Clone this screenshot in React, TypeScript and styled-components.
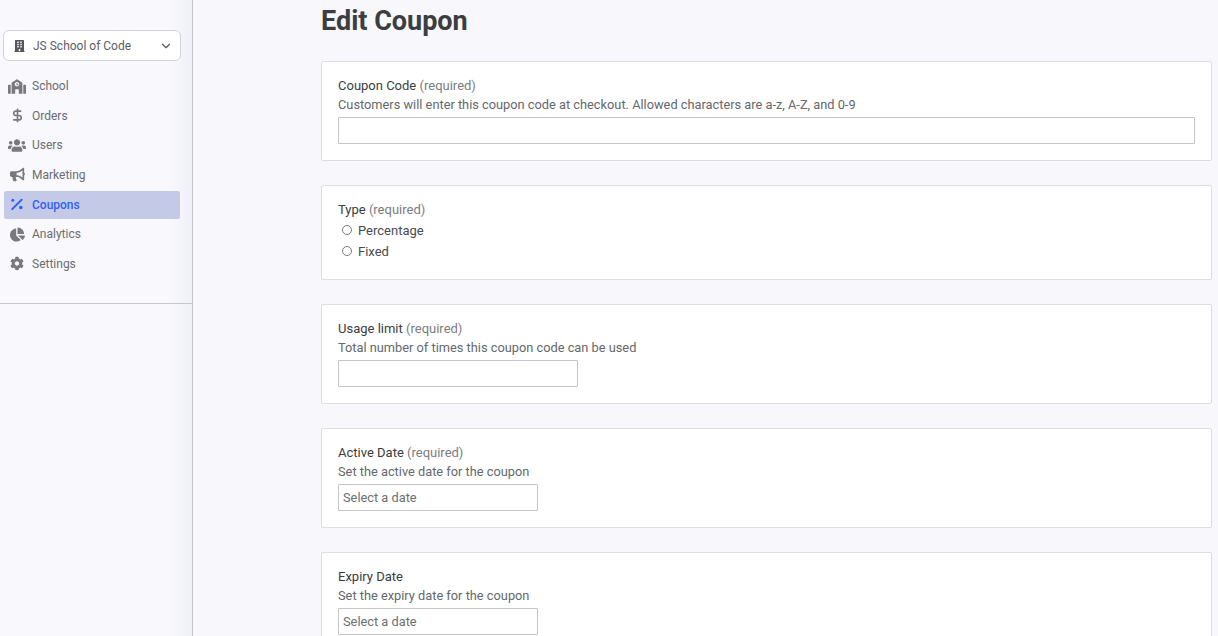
import React from "react";
import styled, { createGlobalStyle } from "styled-components";
import { FaBuilding, FaBullhorn, FaChartPie, FaCog, FaSchool, FaUsers } from "react-icons/fa";
import { ChevronDown } from "lucide-react";

const Global = createGlobalStyle`
  html, body { margin: 0; height: 636px; overflow: hidden; background: #f7f7fc; }
  body { font-family: Roboto, "Liberation Sans", sans-serif; font-size: 13px; color: #3d3f42; }
  * { box-sizing: border-box; }
`;
const Page = styled.div`display: flex; height: 636px; overflow: hidden;`;
const Sidebar = styled.aside`
  width: 193px; flex: none; height: 636px; padding-top: 30px;
  background: linear-gradient(90deg, #f8f8fd 0, #f8f8fd 170px, #eff0f8 192px);
  border-right: 1px solid #c4c5cc;
`;
const SchoolSelect = styled.div`
  margin: 0 11px 0 3px; height: 31px; display: flex; align-items: center; padding: 0 7px 0 10px;
  background: #fff; border: 1px solid #d3d4d9; border-radius: 6px; color: #5c5e62; font-size: 12px;
  svg:first-child { width: 11px; height: 12px; margin-right: 8px; color: #55575b; }
  svg:last-child { width: 14px; height: 14px; margin-left: auto; color: #55575b; }
`;
const Nav = styled.nav`
  margin: 11.6px 12px 23.4px 4px; display: flex; flex-direction: column;
`;
const NavItem = styled.a<{ $active?: boolean }>`
  height: 28px; margin-bottom: 1.6px; padding-bottom: ${(p) => (p.$active ? 0 : 1)}px; display: flex; align-items: center; border-radius: 2px; font-size: 12px;
  color: ${(p) => (p.$active ? "#2f62f5" : "#6b6d71")};
  font-weight: ${(p) => (p.$active ? 500 : 400)};
  background: ${(p) => (p.$active ? "#c5c9e8" : "transparent")};
`;
const IconSlot = styled.span<{ $active?: boolean; $w: number }>`
  width: 28px; flex: none; display: flex; justify-content: center; padding-right: 2px;
  color: ${(p) => (p.$active ? "#2f62f5" : "#77797c")};
  svg { width: ${(p) => p.$w}px; height: ${(p) => Math.min(p.$w + 1, 15)}px; }
`;
const Divider = styled.hr`margin: 0; border: 0; border-top: 1px solid #c6c7cc;`;
const Main = styled.main`flex: 1; padding: 0 6px 0 128px; min-width: 0;`;
const Title = styled.h1`margin: 5px 0 23px; font-size: 27px; line-height: 33px; font-weight: 700; color: #3b3d40;`;
const Card = styled.section<{ $h: number }>`
  height: ${(p) => p.$h}px; flex: none; margin-bottom: 24px; padding: 15px 16px 0;
  background: #fff; border: 1px solid #dcdde1; border-radius: 2px;
`;
const Label = styled.div`font-size: 13px; line-height: 17px; height: 17px; color: #3a3d41;`;
const Req = styled.span`color: #7b7d80;`;
const Help = styled.div`font-size: 12.8px; line-height: 17px; height: 23px; padding-top: 2px; color: #65686c;`;
const TextInput = styled.div<{ $w: string }>`
  width: ${(p) => p.$w}; height: 27px; border: 1px solid #c4c5ca; border-radius: 1px; background: #fff;
  padding: 0 4px; line-height: 25px; font-size: 12.8px; color: #6d6f72;
`;
const RadioRow = styled.label`display: flex; align-items: center; height: 21px; padding-left: 4px; font-size: 13px; color: #484b4f;`;
const RadioDot = styled.span`
  width: 10px; height: 10px; margin-right: 6px; border: 1px solid #77797c; border-radius: 50%; background: #fff; position: relative; top: -1px;
`;
const Radios = styled.div`padding-top: 2px;`;

const PercentIcon = () => (
  <svg viewBox="0 0 14 14" fill="currentColor">
    <circle cx="2.8" cy="2.8" r="1.5" />
    <circle cx="10.8" cy="10" r="1.8" />
    <path d="M2.2 11.6 11.6 2.2" stroke="currentColor" strokeWidth="2" strokeLinecap="round" />
  </svg>
);

const DollarIcon = () => (
  <svg viewBox="0 0 24 24" fill="none" stroke="currentColor" strokeWidth="2.6" strokeLinecap="round" strokeLinejoin="round">
    <path d="M12 2v20" />
    <path d="M17 5H9.5a3.5 3.5 0 0 0 0 7h5a3.5 3.5 0 0 1 0 7H6" />
  </svg>
);

const items = [
  ["School", FaSchool, 18], ["Orders", DollarIcon, 15], ["Users", FaUsers, 18], ["Marketing", FaBullhorn, 15],
  ["Coupons", PercentIcon, 14], ["Analytics", FaChartPie, 15], ["Settings", FaCog, 14],
] as const;

export default function App() {
  return (
    <Page>
      <Global />
      <Sidebar>
        <SchoolSelect><FaBuilding />JS School of Code<ChevronDown /></SchoolSelect>
        <Nav>
          {items.map(([name, Icon, w]) => (
            <NavItem key={name} $active={name === "Coupons"}>
              <IconSlot $active={name === "Coupons"} $w={w}><Icon /></IconSlot>{name}
            </NavItem>
          ))}
        </Nav>
        <Divider />
      </Sidebar>
      <Main>
        <Title>Edit Coupon</Title>
        <Card $h={100}>
          <Label>Coupon Code <Req>(required)</Req></Label>
          <Help>Customers will enter this coupon code at checkout. Allowed characters are a-z, A-Z, and 0-9</Help>
          <TextInput $w="100%" />
        </Card>
        <Card $h={95}>
          <Label>Type <Req>(required)</Req></Label>
          <Radios>
            <RadioRow><RadioDot />Percentage</RadioRow>
            <RadioRow><RadioDot />Fixed</RadioRow>
          </Radios>
        </Card>
        <Card $h={100}>
          <Label>Usage limit <Req>(required)</Req></Label>
          <Help>Total number of times this coupon code can be used</Help>
          <TextInput $w="240px" />
        </Card>
        <Card $h={100}>
          <Label>Active Date <Req>(required)</Req></Label>
          <Help>Set the active date for the coupon</Help>
          <TextInput $w="200px">Select a date</TextInput>
        </Card>
        <Card $h={100}>
          <Label>Expiry Date</Label>
          <Help>Set the expiry date for the coupon</Help>
          <TextInput $w="200px">Select a date</TextInput>
        </Card>
      </Main>
    </Page>
  );
}
